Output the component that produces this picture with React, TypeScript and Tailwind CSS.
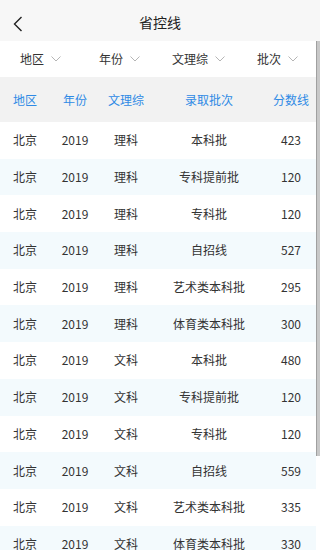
import React from "react";

const rows: [string, string, string, string, string][] = [
  ["北京", "2019", "理科", "本科批", "423"],
  ["北京", "2019", "理科", "专科提前批", "120"],
  ["北京", "2019", "理科", "专科批", "120"],
  ["北京", "2019", "理科", "自招线", "527"],
  ["北京", "2019", "理科", "艺术类本科批", "295"],
  ["北京", "2019", "理科", "体育类本科批", "300"],
  ["北京", "2019", "文科", "本科批", "480"],
  ["北京", "2019", "文科", "专科提前批", "120"],
  ["北京", "2019", "文科", "专科批", "120"],
  ["北京", "2019", "文科", "自招线", "559"],
  ["北京", "2019", "文科", "艺术类本科批", "335"],
  ["北京", "2019", "文科", "体育类本科批", "330"],
];

const font = { fontFamily: '"Noto Sans CJK SC", "Noto Sans", sans-serif' };

function Chevron() {
  return (
    <svg width="10" height="6" viewBox="0 0 10 6" className="ml-[7px]">
      <path d="M0.5 0.5 L5 5 L9.5 0.5" fill="none" stroke="#b5b5b5" strokeWidth="1" />
    </svg>
  );
}

export default function App() {
  const filters = ["地区", "年份", "文理综", "批次"];
  const headers = ["地区", "年份", "文理综", "录取批次", "分数线"];
  return (
    <div className="relative w-[320px] h-[550px] overflow-hidden bg-white text-[#333]" style={font}>
      <div className="h-[41px] bg-[#f7f7f7] flex items-center pt-[3px] relative">
        <svg width="10" height="16" viewBox="0 0 10 16" className="absolute left-[13px] top-[16px]">
          <path d="M8.5 1 L1.5 8 L8.5 15" fill="none" stroke="#222" strokeWidth="1.4" />
        </svg>
        <div className="flex-1 text-center text-[14px] text-[#222] leading-none">省控线</div>
      </div>
      <div className="w-[316px]">
        <div className="h-[36px] grid grid-cols-4 bg-white">
          {filters.map((f) => (
            <div key={f} className="flex items-center justify-center text-[12px] text-[#333] pl-[2px]">
              {f}
              <Chevron />
            </div>
          ))}
        </div>
        <div className="h-[45px] bg-[#f2f2f2] grid grid-cols-[50px_50px_52px_114px_50px] items-center text-[12px] text-[#2f8ae5]">
          {headers.map((h) => (
            <div key={h} className="text-center">{h}</div>
          ))}
        </div>
        {rows.map((r, i) => (
          <div
            key={i}
            className={`h-[36.7px] grid grid-cols-[50px_50px_52px_114px_50px] items-center text-[12px] text-[#333] ${i % 2 === 1 ? "bg-[#f3fafd]" : "bg-white"}`}
          >
            {r.map((c, j) => (
              <div key={j} className="text-center">{c}</div>
            ))}
          </div>
        ))}
      </div>
      <div className="absolute left-[316px] top-[41px] w-[4px] h-[415px] bg-[#c8c8c8] border-l border-[#a0a0a0]" />
    </div>
  );
}
